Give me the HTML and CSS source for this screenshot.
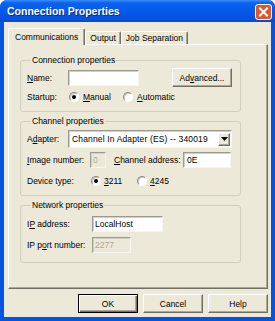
FILE: index.html
```html
<!DOCTYPE html>
<html lang="en">
<head>
  <meta charset="UTF-8" />
  <title>Connection Properties</title>
  <link rel="stylesheet" href="styles.css">
</head>
<body>
  <div class="window">
    <div class="titlebar">
      <span class="title">Connection Properties</span>
      <span class="close">
        <svg width="17" height="16" viewBox="0 0 17 16">
          <rect x="0.5" y="0.5" width="16" height="15" rx="2.5" fill="#E0552B" stroke="#ffffff"/>
          <path d="M5 4.5 L12 11.5 M12 4.5 L5 11.5" stroke="#ffffff" stroke-width="2" stroke-linecap="square"/>
        </svg>
      </span>
    </div>

    <div class="client">
      <div class="tabs">
        <div class="tab active">Communications</div>
        <div class="tab">Output</div>
        <div class="tab">Job Separation</div>
      </div>

      <div class="panel">
        <fieldset class="group g1">
          <legend>Connection properties</legend>
          <div class="row r1">
            <span class="lbl w41"><u>N</u>ame:</span>
            <span class="input name"></span>
            <span class="spacer"></span>
            <span class="btn adv">Ad<u>v</u>anced...</span>
          </div>
          <div class="row r2">
            <span class="lbl w41">Startup:</span>
            <span class="radio on"></span><span class="opt w39"><u>M</u>anual</span>
            <span class="radio"></span><span class="opt"><u>A</u>utomatic</span>
          </div>
        </fieldset>

        <fieldset class="group g2">
          <legend>Channel properties</legend>
          <div class="row r-adapter">
            <span class="lbl w41">A<u>d</u>apter:</span>
            <span class="select">
              <span class="select-text">Channel In Adapter (ES) -- 340019</span>
              <span class="drop">
                <svg width="7" height="4" viewBox="0 0 7 4"><path d="M0 0 H7 L3.5 4 Z" fill="#000"/></svg>
              </span>
            </span>
          </div>
          <div class="row r-image">
            <span class="lbl w63"><u>I</u>mage number:</span>
            <span class="input img disabled">0</span>
            <span class="lbl chan"><u>C</u>hannel address:</span>
            <span class="input addr">0E</span>
          </div>
          <div class="row r-device">
            <span class="lbl w63">Device type:</span>
            <span class="radio on"></span><span class="opt w32"><u>3</u>211</span>
            <span class="radio"></span><span class="opt"><u>4</u>245</span>
          </div>
        </fieldset>

        <fieldset class="group g3">
          <legend>Network properties</legend>
          <div class="row r-ip">
            <span class="lbl w65">I<u>P</u> address:</span>
            <span class="input ip">LocalHost</span>
          </div>
          <div class="row r-port">
            <span class="lbl w65">IP p<u>o</u>rt number:</span>
            <span class="input port disabled">2277</span>
          </div>
        </fieldset>
      </div>

      <div class="buttons">
        <span class="btn default">OK</span>
        <span class="btn">Cancel</span>
        <span class="btn">Help</span>
      </div>
    </div>
  </div>
</body>
</html>
```

FILE: styles.css
```css
body {
  margin: 0;
  background: #ffffff;
  font-family: 'Liberation Sans', Arial, sans-serif;
  font-size: 8.5px;
  color: #000;
}
.window {
  width: 275px;
  height: 321px;
  background: #0553E2;
  border-radius: 7px 7px 0 0;
  display: flex;
  flex-direction: column;
  overflow: hidden;
}
.titlebar {
  height: 22px;
  flex-shrink: 0;
  display: flex;
  align-items: center;
  padding: 0 3px 0 7px;
  background: linear-gradient(#3C8EF8 0, #0C61EE 3px, #0558E8 12px, #0451DF 19px, #0A48CB 22px);
}
.title {
  flex: 1;
  color: #fff;
  font-weight: bold;
  font-size: 10.5px;
  text-shadow: 1px 1px #0A2A8A;
}
.close {
  display: flex;
  margin-top: 1px;
}
.client {
  flex: 1;
  margin: 0 4px 4px;
  background: #ECE9D8;
  padding: 6px 3px 0 4px;
  display: flex;
  flex-direction: column;
}
.tabs {
  height: 16px;
  display: flex;
  align-items: flex-end;
}
.tab {
  height: 12px;
  line-height: 12px;
  padding: 0 4px;
  border-top: 1px solid #fff;
  border-left: 1px solid #fff;
  border-right: 1px solid #716F64;
  border-radius: 2px 2px 0 0;
  box-shadow: inset -1px 0 #ACA899;
  white-space: nowrap;
}
.tab.active {
  height: 16px;
  line-height: 16px;
  padding: 0 6px 0 6px;
  margin-bottom: -1px;
  background: #ECE9D8;
  position: relative;
  z-index: 1;
}
.panel {
  height: 245px;
  box-sizing: border-box;
  border-top: 1px solid #fff;
  border-left: 1px solid #fff;
  border-right: 1px solid #716F64;
  border-bottom: 1px solid #716F64;
  box-shadow: inset -1px -1px #ACA899;
  padding: 10px 0 0 11px;
}
.group {
  width: 221px;
  box-sizing: border-box;
  margin: 0;
  border: 1px solid #D0D0BF;
  border-radius: 3px;
  padding: 3px 8px 5px 6px;
}
.group legend {
  line-height: 10px;
  padding: 0 1px;
  margin-left: 4px;
}
.g2, .g3 {
  margin-top: 4px;
}
.g2 {
  padding-top: 4px;
  padding-bottom: 6px;
}
.g3 {
  padding-top: 6px;
  padding-bottom: 9px;
}
.row {
  display: flex;
  align-items: center;
  height: 16px;
}
.r1 { height: 19px; }
.r2 { height: 18px; margin-top: 1px; }
.r-adapter { height: 18px; }
.r-image { margin-top: 4px; }
.r-device { margin-top: 5px; }
.r-port { margin-top: 5px; }
.lbl { white-space: nowrap; }
.w41 { width: 41px; flex-shrink: 0; }
.w63 { width: 63px; flex-shrink: 0; }
.w65 { width: 65px; flex-shrink: 0; }
.w39 { width: 39px; }
.w32 { width: 32px; }
.spacer { flex: 1; }
.input {
  height: 16px;
  box-sizing: border-box;
  background: #fff;
  border: 1px solid;
  border-color: #9D9A8E #F6F5F0 #F6F5F0 #9D9A8E;
  box-shadow: inset 1px 1px #D2D0C6;
  line-height: 14px;
  padding: 0 2px;
  white-space: nowrap;
}
.input.disabled {
  background: #ECE9D8;
  color: #ACA899;
}
.name { width: 71px; }
.img { width: 16px; }
.addr { width: 48px; padding-left: 3px; }
.chan { margin-left: 8px; width: 69px; }
.ip { width: 71px; }
.port { width: 39px; }
.btn {
  width: 60px;
  height: 19px;
  box-sizing: border-box;
  display: flex;
  align-items: center;
  justify-content: center;
  background: #ECE9D8;
  border: 1px solid;
  border-color: #fff #716F64 #716F64 #fff;
  box-shadow: inset -1px -1px #ACA899;
}
.btn.default {
  border-color: #000;
  box-shadow: inset 1px 1px #fff, inset -1px -1px #716F64, inset -2px -2px #ACA899;
}
.radio {
  width: 10px;
  height: 10px;
  box-sizing: border-box;
  border-radius: 50%;
  border: 1px solid;
  border-color: #8E8B80 #fff #fff #8E8B80;
  background: #fff;
  box-shadow: inset 1px 1px #C9C6BA;
  margin: 0 4px 0 1px;
  display: flex;
  align-items: center;
  justify-content: center;
  flex-shrink: 0;
}
.radio.on::after {
  content: "";
  width: 4px;
  height: 4px;
  border-radius: 50%;
  background: #000;
}
.r-device .radio { margin-right: 3px; }
.select {
  width: 164px;
  height: 18px;
  box-sizing: border-box;
  display: flex;
  align-items: center;
  background: #fff;
  border: 1px solid;
  border-color: #9D9A8E #F6F5F0 #F6F5F0 #9D9A8E;
  box-shadow: inset 1px 1px #D2D0C6;
  padding: 0 1px 0 3px;
}
.select-text {
  flex: 1;
  white-space: nowrap;
  letter-spacing: 0.15px;
}
.drop {
  width: 12px;
  height: 13px;
  box-sizing: border-box;
  display: flex;
  align-items: center;
  justify-content: center;
  background: #ECE9D8;
  border: 1px solid;
  border-color: #fff #716F64 #716F64 #fff;
  box-shadow: inset -1px -1px #ACA899;
}
.buttons {
  display: flex;
  justify-content: flex-end;
  gap: 5px;
  margin-top: 5px;
}
```
